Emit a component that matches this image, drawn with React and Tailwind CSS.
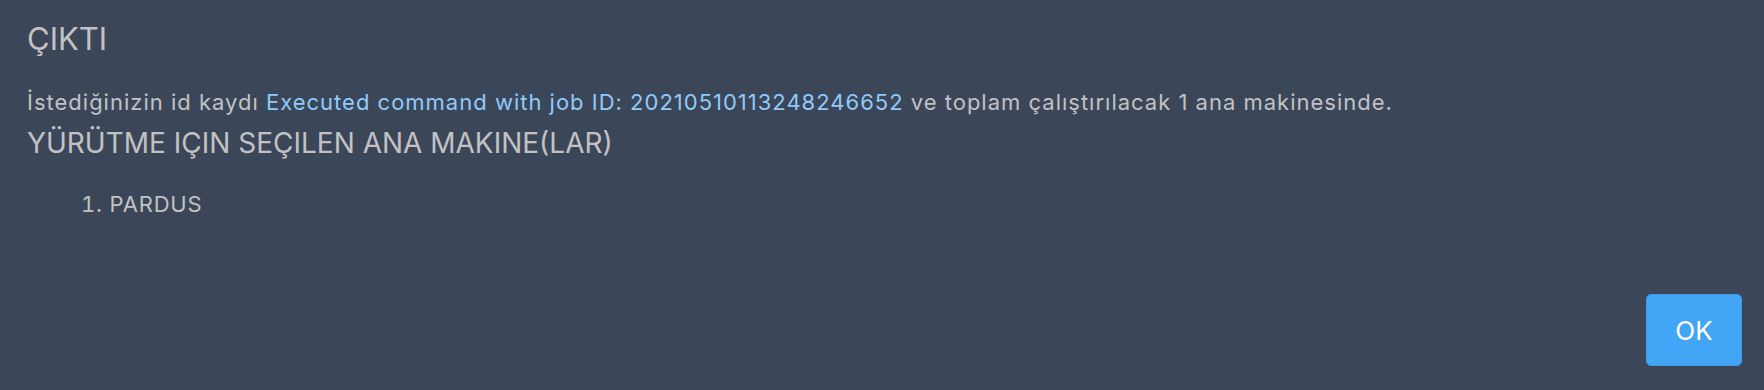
import React from 'react';

const App = () => {
    const hosts = ['PARDUS'];

    return (
        <div className="h-[390px] w-full bg-[#3c4659] flex flex-col font-['Inter','Roboto',sans-serif] text-[#c2c2c4]">
            <div className="pl-[27px] pt-[19px]">
                <h2 className="text-[31px] leading-[40px] font-normal">ÇIKTI</h2>

                <p className="mt-[29px] text-[22px] leading-[28px] tracking-[1px]">
                    İstediğinizin id kaydı{' '}
                    <span className="text-[#90caf9]">Executed command with job ID: 20210510113248246652</span>{' '}
                    ve toplam çalıştırılacak 1 ana makinesinde.
                </p>

                <h3 className="mt-[9px] text-[28px] leading-[36px] font-normal">YÜRÜTME IÇIN SEÇILEN ANA MAKINE(LAR)</h3>

                <ol className="mt-[29px] list-decimal list-inside pl-[54px] text-[22px] leading-[28px] tracking-[0.8px]">
                    {hosts.map((h) => (
                        <li key={h}>{h}</li>
                    ))}
                </ol>
            </div>

            <div className="mt-auto flex justify-end pr-[22px] pb-[24px]">
                <button className="w-[96px] h-[72px] rounded-[5px] bg-[#42a5f5] border border-[#3d9be6] text-white text-[26px] flex items-center justify-center">
                    OK
                </button>
            </div>
        </div>
    );
};

export default App;
